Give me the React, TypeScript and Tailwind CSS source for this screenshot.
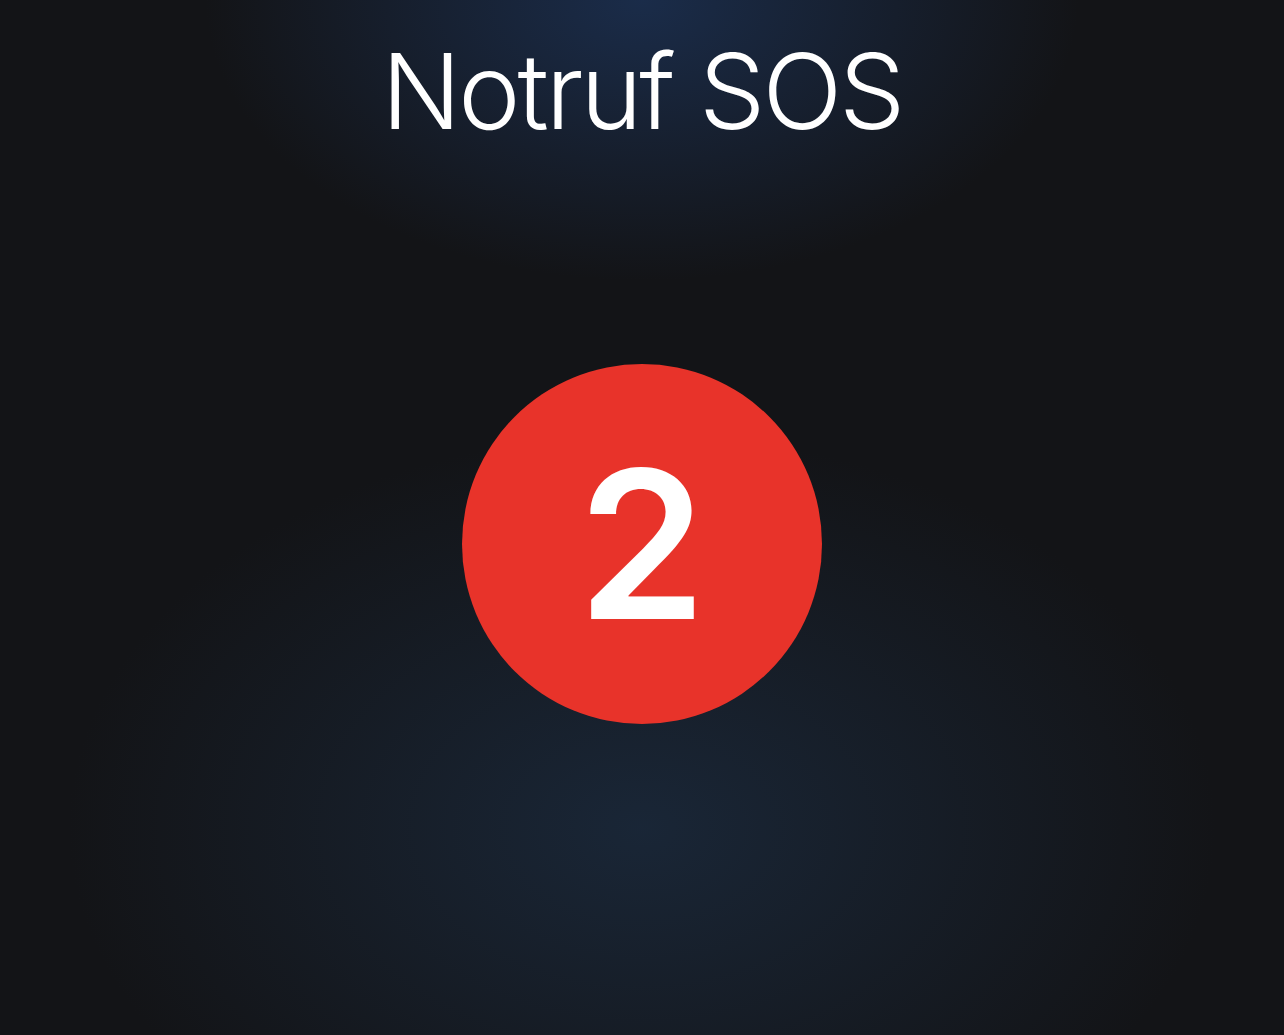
export default function App() {
  const count = 2;

  return (
    <div className="relative h-[1035px] w-full overflow-hidden bg-[#131417] font-['Inter','Liberation_Sans',sans-serif] text-white">
      {/* glow behind the title and a wide bluish haze under the badge */}
      <div className="absolute inset-0 bg-[radial-gradient(ellipse_560px_360px_at_50%_0%,rgba(28,50,86,0.8),transparent_78%)]" />
      <div className="absolute inset-0 bg-[radial-gradient(ellipse_700px_480px_at_50%_80%,rgba(26,40,58,0.9),transparent_82%)]" />

      <div className="relative flex h-full flex-col items-center">
        <h1 className="mt-[33px] text-[105px] font-light leading-[1.1] tracking-[-3px]">
          Notruf SOS
        </h1>

        <div className="mt-[215px] flex h-[360px] w-[360px] items-center justify-center rounded-full bg-[#e8332a]">
          <span className="text-[206px] font-semibold leading-none">{count}</span>
        </div>
      </div>
    </div>
  );
}
